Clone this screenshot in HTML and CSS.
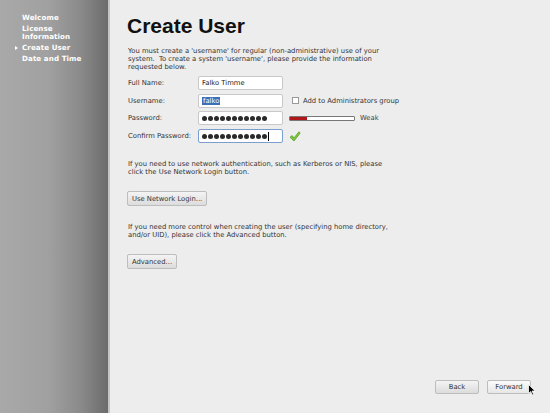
FILE: index.html
```html
<!DOCTYPE html>
<html>
<head>
<meta charset="utf-8">
<link rel="stylesheet" href="styles.css">
</head>
<body>
<div class="screen">
  <aside class="sidebar">
    <ul class="steps">
      <li class="step">Welcome</li>
      <li class="step">License<br>Information</li>
      <li class="step current">Create User</li>
      <li class="step">Date and Time</li>
    </ul>
  </aside>
  <main class="main">
    <h1 class="title">Create User</h1>
    <p class="intro">You must create a 'username' for regular (non-administrative) use of your<br>system.&nbsp; To create a system 'username', please provide the information<br>requested below.</p>
    <div class="form">
      <div class="row">
        <span class="label">Full Name:</span>
        <span class="input">Falko Timme</span>
      </div>
      <div class="row">
        <span class="label">Username:</span>
        <span class="input"><span class="sel">falko</span></span>
        <span class="check"><span class="box"></span>Add to Administrators group</span>
      </div>
      <div class="row">
        <span class="label">Password:</span>
        <span class="input dots"><i></i><i></i><i></i><i></i><i></i><i></i><i></i><i></i><i></i><i></i><i></i></span>
        <span class="strength"><span class="meter"><span class="fill"></span></span><span class="weak">Weak</span></span>
      </div>
      <div class="row">
        <span class="label">Confirm Password:</span>
        <span class="input dots focus"><i></i><i></i><i></i><i></i><i></i><i></i><i></i><i></i><i></i><i></i><i></i><span class="caret"></span></span>
        <svg class="ok" width="12" height="11" viewBox="0 0 12 11"><path d="M1 6.2 L3.2 4.6 L4.9 7 L10 0.8 L11.2 2 L5 10 Z" fill="#7cc63a" stroke="#4f9a1e" stroke-width="0.7" stroke-linejoin="round"/></svg>
      </div>
    </div>
    <p class="note">If you need to use network authentication, such as Kerberos or NIS, please<br>click the Use Network Login button.</p>
    <div class="btnrow"><span class="btn">Use Network Login...</span></div>
    <p class="note">If you need more control when creating the user (specifying home directory,<br>and/or UID), please click the Advanced button.</p>
    <div class="btnrow"><span class="btn">Advanced...</span></div>
    <div class="nav">
      <span class="btn navbtn">Back</span>
      <span class="btn navbtn fwd">Forward</span>
      <svg class="cursor" width="8" height="12" viewBox="0 0 8 12"><path d="M0.5 0.5 L0.5 9.5 L2.7 7.5 L4.2 11 L5.6 10.4 L4.1 7 L7.2 7 Z" fill="#000" stroke="#fff" stroke-width="0.8"/></svg>
    </div>
  </main>
</div>
</body>
</html>
```
FILE: styles.css
```css
html, body { margin: 0; padding: 0; }
body { width: 550px; height: 413px; overflow: hidden; font-family: "DejaVu Sans", sans-serif; background: #ededed; }
.screen { display: flex; width: 550px; height: 413px; }
.sidebar {
  width: 108px; flex: none;
  background: linear-gradient(to right, #a9a9a9 0%, #a0a0a0 45%, #8a8a8a 75%, #6b6b6b 100%);
  border-right: 2px solid #c4c4c4;
}
.steps { list-style: none; margin: 0; padding: 14px 0 0 22px; }
.step { position: relative; color: #fff; font-size: 7.1px; font-weight: bold; line-height: 8px; margin-bottom: 3px; letter-spacing: 0.1px; }
.step.current::before { content: ""; position: absolute; left: -7px; top: 2px; border-left: 3px solid #fff; border-top: 2px solid transparent; border-bottom: 2px solid transparent; }
.main { flex: 1; position: relative; padding: 0 0 0 17px; color: #222; }
.title { margin: 14px 0 0 0; font-family: "Liberation Sans", sans-serif; font-size: 21px; font-weight: 700; line-height: 24px; color: #111; }
.intro, .note { margin: 9px 0 0 1px; font-size: 6.8px; line-height: 8px; color: #333; }
.form { margin-top: 5px; display: flex; flex-direction: column; gap: 3px; }
.row { display: flex; align-items: center; height: 14.6px; }
.label { width: 70px; margin-left: 1px; font-size: 6.8px; color: #333; }
.input { box-sizing: border-box; width: 85px; height: 14px; background: #fff; border: 1px solid #c8c8c8; border-radius: 2px; font-size: 6.8px; padding: 0 0 0 3px; display: flex; align-items: center; color: #222; }
.input.focus { border-color: #7a9fcf; }
.sel { background: #3d6fb8; color: #fff; padding: 0 1px; }
.dots { gap: 1px; }
.dots i { width: 5px; height: 5px; border-radius: 50%; background: #2a2a2a; }
.caret { display: inline-block; width: 1px; height: 9px; background: #000; margin-left: 0; }
.check { display: flex; align-items: center; margin-left: 9px; font-size: 6.8px; color: #333; }
.box { width: 5px; height: 5px; border: 1px solid #999; background: #fff; margin-right: 4px; }
.strength { display: flex; align-items: center; margin-left: 6px; }
.meter { box-sizing: border-box; width: 66px; height: 5px; border: 1px solid #777; background: #fff; border-radius: 1px; display: flex; }
.fill { width: 17px; background: #b0171a; }
.weak { margin-left: 5px; font-size: 6.8px; color: #444; }
.ok { margin-left: 6px; }
.note { margin-top: 17px; }
.btnrow { margin-top: 15px; display: flex; }
.btn { box-sizing: border-box; height: 15px; padding: 0 4px; font-size: 6.8px; color: #333; border: 1px solid #bdbdbd; border-radius: 2px; background: linear-gradient(#f4f4f4, #dcdcdc); display: flex; align-items: center; justify-content: center; }
.nav { position: absolute; left: 325px; top: 380px; display: flex; gap: 8px; align-items: center; }
.navbtn { width: 44px; height: 14px; }
.fwd { background: linear-gradient(#fbfbfb, #e6e6e6); }
.cursor { position: absolute; left: 93px; top: 4px; }
```
